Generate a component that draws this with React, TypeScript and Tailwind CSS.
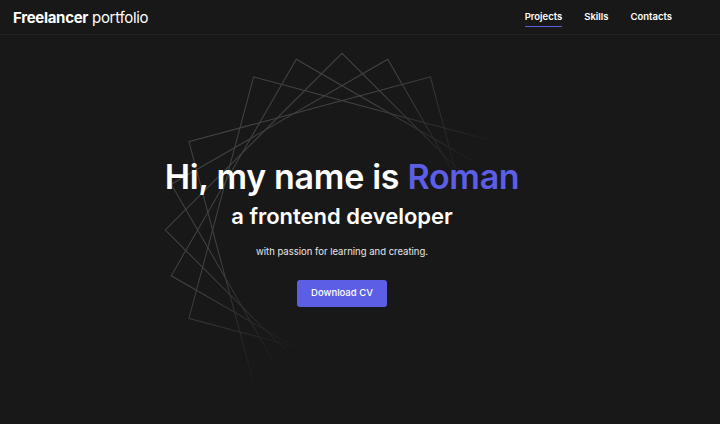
import React from "react";

const ROTATIONS = [15, 30, 45, 60, 75];

function SquaresBackdrop() {
  return (
    <svg
      className="absolute pointer-events-none"
      style={{ left: 342 - 200, top: 231 - 36 - 200 }}
      width={400}
      height={400}
      viewBox="-200 -200 400 400"
    >
      <defs>
        <linearGradient id="fade" gradientUnits="userSpaceOnUse" x1={-50} y1={-50} x2={40} y2={40}>
          <stop offset="0" stopColor="#fff" stopOpacity="1" />
          <stop offset="1" stopColor="#fff" stopOpacity="0" />
        </linearGradient>
        <mask id="fadeMask" maskUnits="userSpaceOnUse" x={-200} y={-200} width={400} height={400}>
          <rect x={-200} y={-200} width={400} height={400} fill="url(#fade)" />
        </mask>
      </defs>
      <g mask="url(#fadeMask)">
        {ROTATIONS.map((r) => (
          <rect
            key={r}
            x={-125}
            y={-125}
            width={250}
            height={250}
            fill="none"
            stroke="#444444"
            strokeWidth={1}
            transform={`rotate(${r})`}
          />
        ))}
      </g>
    </svg>
  );
}

export default function App() {
  return (
    <div
      className="w-[720px] h-[424px] bg-[#181818] text-white overflow-hidden flex flex-col"
      style={{ fontFamily: "Inter, 'Noto Sans', sans-serif" }}
    >
      <header className="h-[35px] shrink-0 border-b border-[#232323] flex items-center justify-between pl-[13px] pr-[48px]">
        <div className="text-[15px] tracking-[-0.3px] leading-none">
          <span className="font-bold">Freelancer</span>{" "}
          <span className="font-normal">portfolio</span>
        </div>
        <nav className="flex items-center gap-[22px] text-[9.5px] font-semibold">
          <a className="relative">
            Projects
            <span className="absolute left-0 right-0 -bottom-[3px] h-[1.5px] bg-[#5c5fe6]" />
          </a>
          <a>Skills</a>
          <a>Contacts</a>
        </nav>
      </header>

      <main className="relative flex-1">
        <SquaresBackdrop />
        <div className="relative flex flex-col items-center pr-[36px] pt-[122px]">
          <h1 className="text-[34px] font-semibold leading-[40px] tracking-[-0.3px]">
            Hi, my name is <span className="text-[#5c5fe6]">Roman</span>
          </h1>
          <h2 className="mt-[4px] text-[22px] font-semibold leading-[30px]">a frontend developer</h2>
          <p className="mt-[14px] text-[9.5px] leading-[14px] text-[#e8e8e8]">
            with passion for learning and creating.
          </p>
          <button className="mt-[21px] w-[90px] h-[27px] rounded-[3px] bg-[#5c5fe6] text-[9.5px] font-medium text-white">
            Download CV
          </button>
        </div>
      </main>
    </div>
  );
}
